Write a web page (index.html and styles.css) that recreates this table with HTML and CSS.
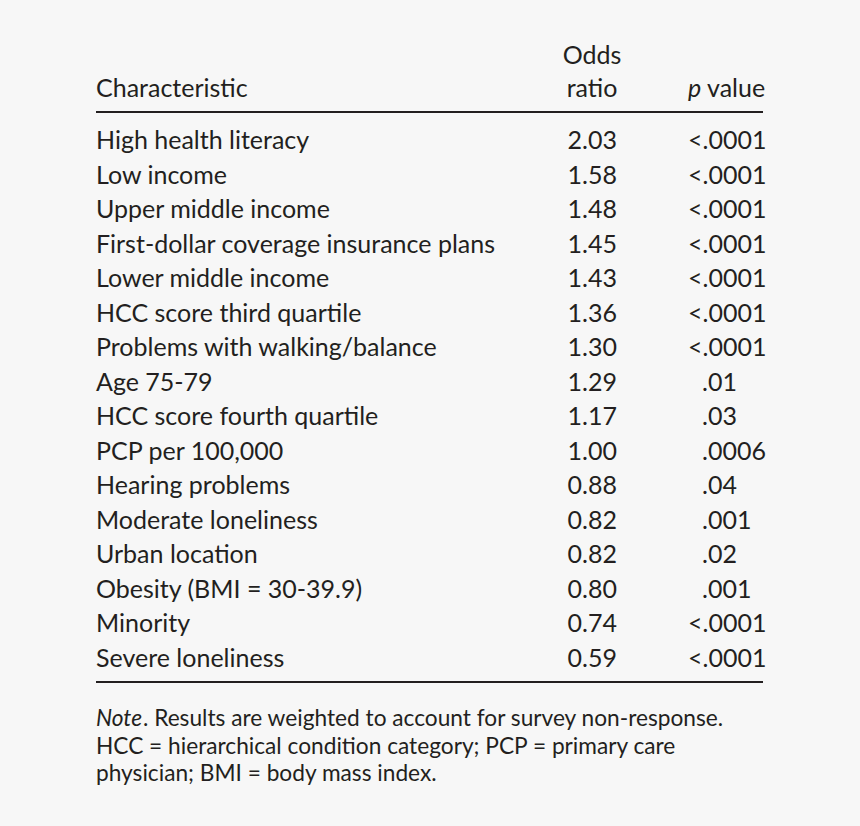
FILE: index.html
```html
<!DOCTYPE html>
<html>
<head>
<meta charset="utf-8">
<link rel="stylesheet" href="styles.css">
</head>
<body>
<div class="page">
  <div class="table">
    <div class="head">
      <div class="hc c1">Characteristic</div>
      <div class="hc c2">Odds<br>ratio</div>
      <div class="hc c3"><i>p</i> value</div>
    </div>
    <div class="body">
      <div class="row"><span class="c1">High health literacy</span><span class="c2">2.03</span><span class="c3">&lt;.0001</span></div>
      <div class="row"><span class="c1">Low income</span><span class="c2">1.58</span><span class="c3">&lt;.0001</span></div>
      <div class="row"><span class="c1">Upper middle income</span><span class="c2">1.48</span><span class="c3">&lt;.0001</span></div>
      <div class="row"><span class="c1">First-dollar coverage insurance plans</span><span class="c2">1.45</span><span class="c3">&lt;.0001</span></div>
      <div class="row"><span class="c1">Lower middle income</span><span class="c2">1.43</span><span class="c3">&lt;.0001</span></div>
      <div class="row"><span class="c1">HCC score third quartile</span><span class="c2">1.36</span><span class="c3">&lt;.0001</span></div>
      <div class="row"><span class="c1">Problems with walking/balance</span><span class="c2">1.30</span><span class="c3">&lt;.0001</span></div>
      <div class="row"><span class="c1">Age 75-79</span><span class="c2">1.29</span><span class="c3 dec">.01</span></div>
      <div class="row"><span class="c1">HCC score fourth quartile</span><span class="c2">1.17</span><span class="c3 dec">.03</span></div>
      <div class="row"><span class="c1">PCP per 100,000</span><span class="c2">1.00</span><span class="c3 dec">.0006</span></div>
      <div class="row"><span class="c1">Hearing problems</span><span class="c2">0.88</span><span class="c3 dec">.04</span></div>
      <div class="row"><span class="c1">Moderate loneliness</span><span class="c2">0.82</span><span class="c3 dec">.001</span></div>
      <div class="row"><span class="c1">Urban location</span><span class="c2">0.82</span><span class="c3 dec">.02</span></div>
      <div class="row"><span class="c1">Obesity (BMI = 30-39.9)</span><span class="c2">0.80</span><span class="c3 dec">.001</span></div>
      <div class="row"><span class="c1">Minority</span><span class="c2">0.74</span><span class="c3">&lt;.0001</span></div>
      <div class="row"><span class="c1">Severe loneliness</span><span class="c2">0.59</span><span class="c3">&lt;.0001</span></div>
    </div>
  </div>
  <p class="note"><i class="it">Note</i>. Results are weighted to account for survey non-response. HCC = hierarchical condition category; PCP = primary care physician; BMI = body mass index.</p>
</div>
</body>
</html>
```
FILE: styles.css
```css
html, body {
  margin: 0;
  padding: 0;
  background: #f7f7f7;
}
.page {
  width: 667px;
  padding: 38px 0 0 96px;
  font-family: Lato, "Noto Sans", sans-serif;
  color: #231f20;
}
.head, .row {
  display: grid;
  grid-template-columns: 466px 60px 141px;
}
.head {
  font-size: 25px;
  line-height: 33px;
  align-items: end;
  padding-bottom: 7px;
  border-bottom: 2px solid #231f20;
}
.body {
  padding: 9px 0 7px;
  border-bottom: 2px solid #231f20;
}
.row {
  font-size: 25px;
  line-height: 34.5px;
}
.c2 { text-align: right; padding-right: 5px; white-space: nowrap; }
.head .c2 { text-align: center; padding-right: 0; }
.c3 { padding-left: 66px; white-space: nowrap; }
.dec { padding-left: 80px; }
.note {
  margin: 21px 0 0;
  width: 655px;
  font-size: 22.7px;
  line-height: 27.5px;
}
.it { padding-right: 1px; }
```
